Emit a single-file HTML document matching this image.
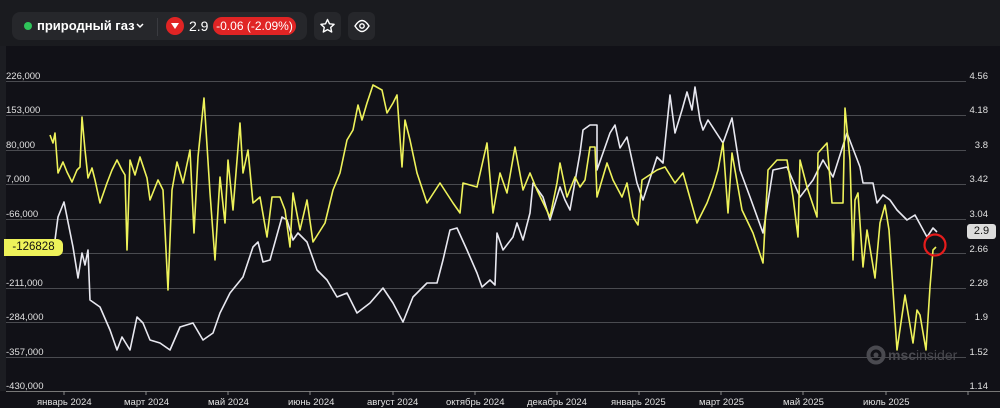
<!DOCTYPE html><html><head><meta charset="utf-8"><style>
body{margin:0;width:1000px;height:408px;background:#111117;font-family:"Liberation Sans",sans-serif;overflow:hidden;position:relative}
.top{position:absolute;left:0;top:0;width:1000px;height:46px;background:#1a1b1f}
.grp{position:absolute;left:12px;top:12px;width:295px;height:28px;background:#26272b;border-radius:8px}
.btn{position:absolute;top:12px;width:27px;height:28px;background:#26272b;border-radius:6px}
.t{position:absolute;color:#fff;font-size:13px;font-weight:bold}
.ax{position:absolute;color:#e0e0e0;font-size:9.5px}
</style></head><body>
<div class="top"></div>
<div class="grp"></div>
<div style="position:absolute;left:24px;top:22px;width:8px;height:8px;border-radius:50%;background:#2fc45a"></div>
<div class="t" style="left:37px;top:18px">природный газ</div>
<svg style="position:absolute;left:136px;top:23px" width="8" height="6"><path d="M1 1l3 3 3-3" fill="none" stroke="#fff" stroke-width="1.5"/></svg>
<div style="position:absolute;left:157px;top:18px;width:1px;height:18px;background:#3a3b40"></div>
<div style="position:absolute;left:166px;top:17px;width:18px;height:18px;border-radius:50%;background:#e02424"></div>
<div style="position:absolute;left:171px;top:23px;width:0;height:0;border-left:4px solid transparent;border-right:4px solid transparent;border-top:6px solid #fff"></div>
<div class="t" style="left:189px;top:18px;font-weight:normal;font-size:14px">2.9</div>
<div style="position:absolute;left:213px;top:17px;width:83px;height:18px;border-radius:9px;background:#e02424;color:#fff;font-size:12px;line-height:18px;text-align:center">-0.06 (-2.09%)</div>
<div class="btn" style="left:314px"></div><div class="btn" style="left:348px"></div>
<svg style="position:absolute;left:0;top:0" width="1000" height="408">
<path d="M327.5 19.5l2 4.3 4.6.5-3.4 3.1 1 4.6-4.2-2.4-4.2 2.4 1-4.6-3.4-3.1 4.6-.5z" fill="none" stroke="#fff" stroke-width="1.4" stroke-linejoin="round"/>
<path d="M355 26c2.5-4 5-5.5 7-5.5s4.5 1.5 7 5.5c-2.5 4-5 5.5-7 5.5s-4.5-1.5-7-5.5z" fill="none" stroke="#fff" stroke-width="1.4"/><circle cx="362" cy="26" r="2.2" fill="none" stroke="#fff" stroke-width="1.4"/>
<rect x="0" y="46" width="6" height="345" fill="#1c1d22"/>
<g stroke="#4a4b50" stroke-width="1">
<line x1="6" x2="966" y1="81.5" y2="81.5"/><line x1="6" x2="966" y1="115.5" y2="115.5"/><line x1="6" x2="966" y1="150.5" y2="150.5"/><line x1="6" x2="966" y1="184.5" y2="184.5"/><line x1="6" x2="966" y1="219.5" y2="219.5"/><line x1="6" x2="966" y1="253.5" y2="253.5"/><line x1="6" x2="966" y1="288.5" y2="288.5"/><line x1="6" x2="966" y1="322.5" y2="322.5"/><line x1="6" x2="966" y1="357.5" y2="357.5"/>
</g>
<line x1="6" x2="1000" y1="391.5" y2="391.5" stroke="#777" stroke-width="1"/>
<g stroke="#888"><line x1="64" x2="64" y1="391" y2="395"/><line x1="146" x2="146" y1="391" y2="395"/><line x1="228" x2="228" y1="391" y2="395"/><line x1="310" x2="310" y1="391" y2="395"/><line x1="393" x2="393" y1="391" y2="395"/><line x1="475" x2="475" y1="391" y2="395"/><line x1="557" x2="557" y1="391" y2="395"/><line x1="639" x2="639" y1="391" y2="395"/><line x1="721" x2="721" y1="391" y2="395"/><line x1="803" x2="803" y1="391" y2="395"/><line x1="886" x2="886" y1="391" y2="395"/><line x1="968" x2="968" y1="391" y2="395"/></g>
<g fill="#4a4a50"><circle cx="876" cy="355" r="7.5" fill="none" stroke="#4a4a50" stroke-width="4"/><circle cx="876" cy="355" r="2.5"/>
<text x="888" y="360" font-family="Liberation Sans" font-size="14" font-weight="bold">msc<tspan font-weight="normal">insider</tspan></text></g>
<polyline fill="none" stroke="#e8e8f0" stroke-width="1.6" stroke-linejoin="round" points="55,240 58,217 64,202 68,222 73,247 78,278 82,253 85,265 88,250 90,300 100,307 110,330 117,350 122,337 130,350 137,317 143,323 150,340 160,343 170,350 180,327 193,323 203,340 213,333 220,313 230,293 243,277 253,247 258,242 263,262 270,260 282,217 287,220 293,240 298,233 307,242 317,270 327,280 337,297 347,293 357,313 370,303 383,288 393,303 403,322 413,297 427,283 437,283 443,260 450,230 457,228 467,250 477,273 482,287 490,280 495,285 497,233 503,250 513,237 517,223 523,240 530,213 533,183 543,197 550,220 560,187 565,200 570,210 580,153 583,130 590,125 597,125 597,170 610,133 615,125 620,148 627,137 637,183 643,200 657,157 663,163 670,95 675,133 682,110 687,92 692,110 695,87 700,120 703,130 708,120 723,143 732,118 740,170 750,197 763,233 773,170 787,167 800,197 813,180 823,160 833,177 847,133 860,167 863,183 873,183 877,203 883,195 890,200 897,210 907,220 915,215 927,237 933,228 937,232"/>
<polyline fill="none" stroke="#eef25a" stroke-width="1.6" stroke-linejoin="round" points="50,135 53,143 55,133 58,173 63,162 67,172 72,182 77,170 80,167 82,117 85,150 88,178 92,168 95,180 100,203 107,183 112,170 117,160 122,170 125,175 127,250 130,160 135,175 140,157 147,178 150,200 158,180 163,190 168,290 172,190 177,162 183,183 190,150 194,233 198,157 204,98 210,193 215,260 220,177 225,223 228,160 233,210 240,123 243,173 248,150 253,203 260,197 267,237 272,197 280,197 285,210 290,247 293,193 300,230 307,200 313,242 325,223 333,190 340,173 347,140 353,130 358,105 362,120 367,103 373,85 382,90 387,113 393,103 397,95 402,167 405,120 410,140 417,173 427,203 440,183 453,203 460,213 463,183 477,187 487,143 493,213 500,173 507,193 515,147 523,190 530,173 537,190 550,217 557,183 560,163 567,197 575,177 580,187 585,180 590,147 595,147 597,197 607,163 613,180 622,197 627,183 633,217 638,225 642,180 657,170 665,167 675,183 683,173 697,223 707,203 713,187 718,170 723,143 728,213 732,153 742,210 753,233 763,263 768,170 777,160 787,160 793,197 798,237 800,160 807,187 817,217 818,153 827,143 832,203 843,203 845,108 850,160 853,260 855,200 858,193 863,267 867,230 875,278 880,223 885,205 889,230 897,350 905,295 913,343 917,310 920,315 926,350 930,287 933,250 936,247"/>
<circle cx="935" cy="245" r="10.5" fill="none" stroke="#e51c1c" stroke-width="2.2"/>
</svg>
<div class="ax" style="left:6px;top:71px">226,000</div>
<div class="ax" style="left:6px;top:105px">153,000</div>
<div class="ax" style="left:6px;top:140px">80,000</div>
<div class="ax" style="left:6px;top:174px">7,000</div>
<div class="ax" style="left:6px;top:209px">-66,000</div>
<div class="ax" style="left:6px;top:278px">-211,000</div>
<div class="ax" style="left:6px;top:312px">-284,000</div>
<div class="ax" style="left:6px;top:347px">-357,000</div>
<div class="ax" style="left:6px;top:381px">-430,000</div>
<div style="position:absolute;left:4px;top:239px;width:59px;height:17px;border-radius:0 6px 6px 0;background:#eef25a;color:#111;font-size:11.5px;line-height:17px;text-align:center">-126828</div>
<div class="ax" style="right:12px;top:71px">4.56</div>
<div class="ax" style="right:12px;top:105px">4.18</div>
<div class="ax" style="right:12px;top:140px">3.8</div>
<div class="ax" style="right:12px;top:174px">3.42</div>
<div class="ax" style="right:12px;top:209px">3.04</div>
<div class="ax" style="right:12px;top:244px">2.66</div>
<div class="ax" style="right:12px;top:278px">2.28</div>
<div class="ax" style="right:12px;top:312px">1.9</div>
<div class="ax" style="right:12px;top:347px">1.52</div>
<div class="ax" style="right:12px;top:381px">1.14</div>
<div style="position:absolute;left:967px;top:224px;width:29px;height:15px;border-radius:3px;background:#dcdcdc;color:#111;font-size:11px;line-height:15px;text-align:center">2.9</div>
<div class="ax" style="left:37px;top:397px">январь 2024</div>
<div class="ax" style="left:124px;top:397px">март 2024</div>
<div class="ax" style="left:208px;top:397px">май 2024</div>
<div class="ax" style="left:288px;top:397px">июнь 2024</div>
<div class="ax" style="left:367px;top:397px">август 2024</div>
<div class="ax" style="left:446px;top:397px">октябрь 2024</div>
<div class="ax" style="left:527px;top:397px">декабрь 2024</div>
<div class="ax" style="left:611px;top:397px">январь 2025</div>
<div class="ax" style="left:699px;top:397px">март 2025</div>
<div class="ax" style="left:783px;top:397px">май 2025</div>
<div class="ax" style="left:863px;top:397px">июль 2025</div>
</body></html>
